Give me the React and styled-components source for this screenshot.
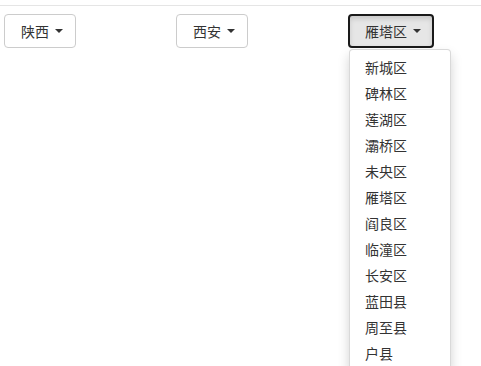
import React, { useState } from 'react';
import styled, { createGlobalStyle } from 'styled-components';

const GlobalStyle = createGlobalStyle`
    html, body {
        margin: 0;
        padding: 0;
        background: #fff;
    }
    body {
        font-family: "Noto Sans CJK SC", "Microsoft YaHei", "Liberation Sans", sans-serif;
        font-size: 14px;
        line-height: 1.42857;
        color: #333;
    }
`;

const Page = styled.div`
    margin-top: 5px;
    border-top: 1px solid #e5e5e5;
    padding: 8px 0 0 4px;
`;

const Row = styled.div`
    display: grid;
    grid-template-columns: repeat(3, 172px);
    align-items: start;
`;

const Dropdown = styled.div`
    display: flex;
    flex-direction: column;
    align-items: flex-start;
    justify-self: start;
`;

const Toggle = styled.button`
    display: inline-flex;
    align-items: center;
    height: 34px;
    padding: ${p => (p.$open ? '5px 11px 5px 15px' : '6px 12px 6px 16px')};
    font: inherit;
    color: #333;
    background: ${p => (p.$open ? '#e6e6e6' : '#fff')};
    border: ${p => (p.$open ? '2px solid #1a1a1a' : '1px solid #ccc')};
    border-radius: 4px;
    box-shadow: ${p => (p.$open ? 'inset 0 3px 5px rgba(0,0,0,.125)' : 'none')};
    cursor: pointer;
    outline: none;
`;

const Caret = styled.span`
    display: inline-block;
    width: 0;
    height: 0;
    margin-left: 6px;
    border-top: 4px solid #333;
    border-left: 4px solid transparent;
    border-right: 4px solid transparent;
`;

const Menu = styled.ul`
    min-width: 100px;
    margin: 1px 0 0 1px;
    padding: 4px 0 5px;
    list-style: none;
    background: #fff;
    border: 1px solid rgba(0, 0, 0, .15);
    border-radius: 4px;
    box-shadow: 0 6px 12px rgba(0, 0, 0, .175);
`;

const Item = styled.li`
    padding: 3px 15px;
    line-height: 20px;
    white-space: nowrap;
    color: #333;
    cursor: pointer;

    &:hover {
        background: #f5f5f5;
    }
`;

const districts = [
    '新城区', '碑林区', '莲湖区', '灞桥区', '未央区', '雁塔区',
    '阎良区', '临潼区', '长安区', '蓝田县', '周至县', '户县'
];

function Select({ label, items, defaultOpen = false }) {
    const [open, setOpen] = useState(defaultOpen);

    return (
        <Dropdown>
            <Toggle $open={open} onClick={() => setOpen(!open)}>
                {label}
                <Caret />
            </Toggle>
            {open && items && (
                <Menu>
                    {items.map(name => (
                        <Item key={name}>{name}</Item>
                    ))}
                </Menu>
            )}
        </Dropdown>
    );
}

export default function App() {
    return (
        <>
            <GlobalStyle />
            <Page>
                <Row>
                    <Select label="陕西" />
                    <Select label="西安" />
                    <Select label="雁塔区" items={districts} defaultOpen />
                </Row>
            </Page>
        </>
    );
}
